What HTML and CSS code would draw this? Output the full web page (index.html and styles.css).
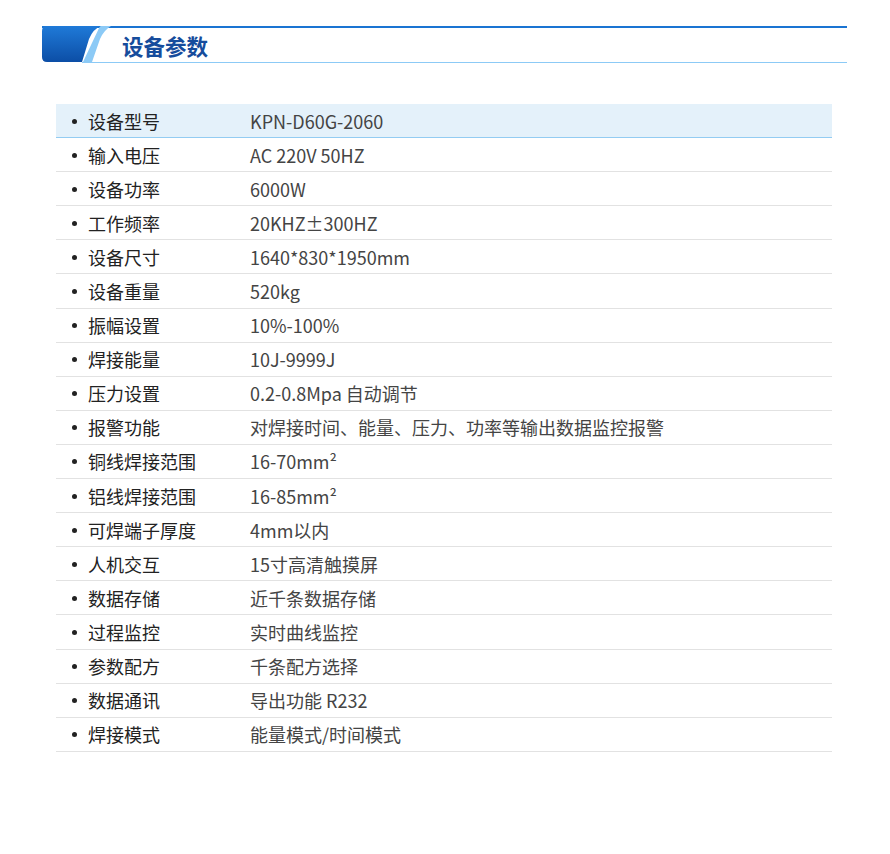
FILE: index.html
```html
<!DOCTYPE html>
<html lang="zh">
<head>
<meta charset="utf-8">
<link rel="stylesheet" href="styles.css">
</head>
<body>
<div class="page">
  <div class="head">
    <svg class="tab" width="72" height="36" viewBox="0 0 72 36">
      <defs>
        <linearGradient id="g" x1="0" y1="0" x2="0" y2="1">
          <stop offset="0" stop-color="#1f7ad8"/>
          <stop offset="1" stop-color="#0c4ea6"/>
        </linearGradient>
      </defs>
      <path d="M58 0 L69 0 Q62 4 58 13 L50 36 L41 36 Z" fill="#8ccaf6"/>
      <path d="M5 0 L59 0 Q51 3 47 13 L40 36 L5 36 Q0 36 0 31 L0 5 Q0 0 5 0 Z" fill="url(#g)"/>
    </svg>
    <div class="title">设备参数</div>
  </div>
  <ul class="specs">
    <li class="row first"><span class="k">设备型号</span><span class="v">KPN-D60G-2060</span></li>
    <li class="row"><span class="k">输入电压</span><span class="v">AC 220V 50HZ</span></li>
    <li class="row"><span class="k">设备功率</span><span class="v">6000W</span></li>
    <li class="row"><span class="k">工作频率</span><span class="v">20KHZ±300HZ</span></li>
    <li class="row"><span class="k">设备尺寸</span><span class="v">1640*830*1950mm</span></li>
    <li class="row"><span class="k">设备重量</span><span class="v">520kg</span></li>
    <li class="row"><span class="k">振幅设置</span><span class="v">10%-100%</span></li>
    <li class="row"><span class="k">焊接能量</span><span class="v">10J-9999J</span></li>
    <li class="row"><span class="k">压力设置</span><span class="v">0.2-0.8Mpa 自动调节</span></li>
    <li class="row"><span class="k">报警功能</span><span class="v">对焊接时间、能量、压力、功率等输出数据监控报警</span></li>
    <li class="row"><span class="k">铜线焊接范围</span><span class="v">16-70mm²</span></li>
    <li class="row"><span class="k">铝线焊接范围</span><span class="v">16-85mm²</span></li>
    <li class="row"><span class="k">可焊端子厚度</span><span class="v">4mm以内</span></li>
    <li class="row"><span class="k">人机交互</span><span class="v">15寸高清触摸屏</span></li>
    <li class="row"><span class="k">数据存储</span><span class="v">近千条数据存储</span></li>
    <li class="row"><span class="k">过程监控</span><span class="v">实时曲线监控</span></li>
    <li class="row"><span class="k">参数配方</span><span class="v">千条配方选择</span></li>
    <li class="row"><span class="k">数据通讯</span><span class="v">导出功能 R232</span></li>
    <li class="row"><span class="k">焊接模式</span><span class="v">能量模式/时间模式</span></li>
  </ul>
</div>
</body>
</html>
```
FILE: styles.css
```css
html, body {
  margin: 0;
  padding: 0;
  background: #ffffff;
}
body {
  font-family: "Noto Sans CJK SC", "Noto Sans", sans-serif;
}
.page {
  width: 890px;
  padding-top: 26px;
}
.head {
  margin-left: 42px;
  width: 805px;
  height: 36px;
  display: flex;
  align-items: center;
  border-top: 2px solid #1a74d2;
  box-sizing: border-box;
  position: relative;
}
.head::after {
  content: "";
  position: absolute;
  left: 40px;
  right: 0;
  bottom: -1px;
  height: 1px;
  background: #8ccaf6;
}
.tab {
  position: absolute;
  left: 0;
  top: -2px;
  display: block;
}
.title {
  margin-left: 80px;
  font-size: 21.5px;
  font-weight: 700;
  color: #164c9c;
  line-height: 1;
  margin-top: 1px;
}
.specs {
  list-style: none;
  margin: 42px 0 0 56px;
  padding: 0;
  width: 776px;
}
.row {
  display: flex;
  align-items: center;
  height: 33.1px;
  border-bottom: 1px solid #e2e2e2;
  font-size: 18px;
}
.row.first {
  background: #e4f1fa;
  border-bottom-color: #93ccf2;
}
.k {
  position: relative;
  width: 194px;
  padding-left: 32px;
  color: #222222;
  box-sizing: border-box;
  flex: none;
}
.k::before {
  content: "";
  position: absolute;
  left: 16px;
  top: 50%;
  width: 5px;
  height: 5px;
  margin-top: -2px;
  border-radius: 50%;
  background: #222222;
}
.v {
  color: #444444;
}
```
